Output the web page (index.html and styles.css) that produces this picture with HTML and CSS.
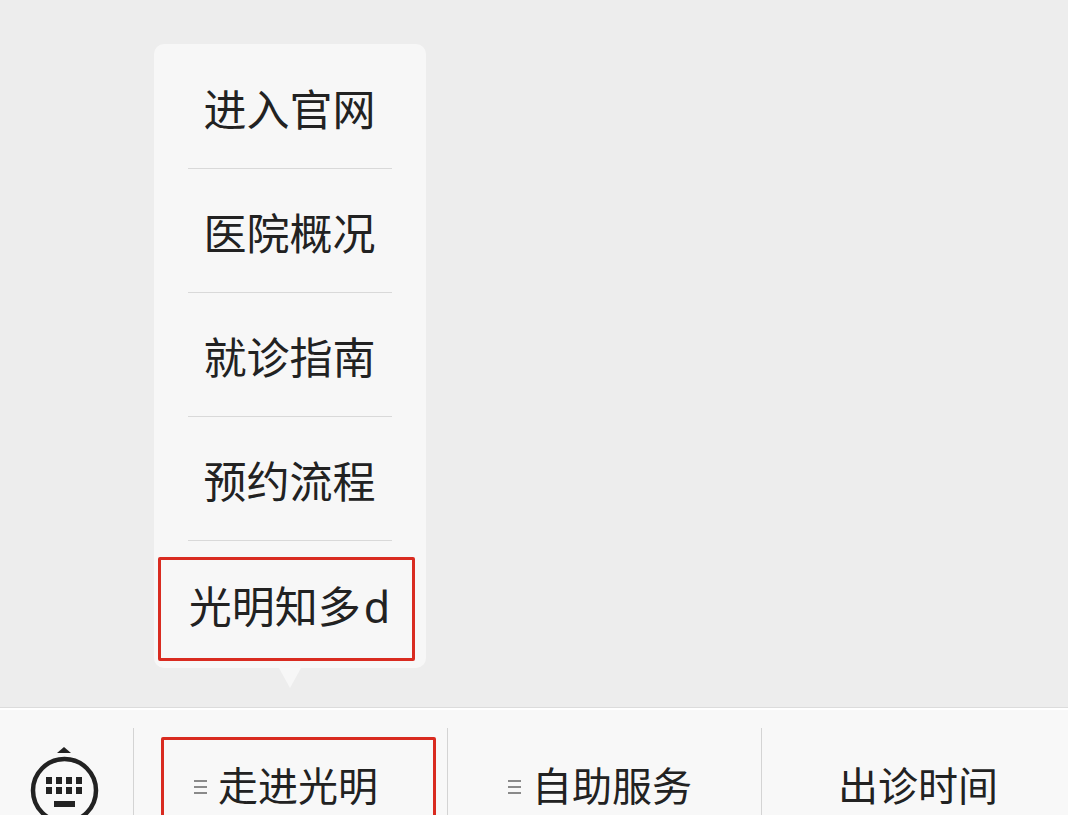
FILE: index.html
```html
<!DOCTYPE html>
<html lang="zh-CN">

<head>
<meta charset="utf-8">
<title>光明</title>
<link rel="stylesheet" href="styles.css">
</head>
<body>
<div class="page">
<div class="popup">
<div class="popup-item">进入官网</div>
<div class="popup-item">医院概况</div>
<div class="popup-item">就诊指南</div>
<div class="popup-item">预约流程</div>
<div class="popup-item popup-last">光明知多<span class="latin">d</span></div>
<div class="mark mark-popup"></div>
<div class="popup-arrow"></div>
</div>
<div class="bar">
<div class="bar-keyboard">
<svg class="keyboard-icon" width="70" height="70" viewBox="0 0 70 70">
<path d="M27 7 L34 1 L41 7 Z" fill="#222"/>
<circle cx="34.5" cy="44.5" r="31.5" fill="none" stroke="#222" stroke-width="4.5"/>
<path fill="#222" d="M16 31h6v7h-6zM26 31h6v7h-6zM36 31h6v7h-6zM46 31h6v7h-6zM16 41h6v7h-6zM26 41h6v7h-6zM36 41h6v7h-6zM46 41h6v7h-6zM24 55h21v6H24z"/>
</svg>
</div>
<div class="bar-cell has-icon">
<span class="menu-lines"></span>走进光明
<div class="mark mark-bar"></div>
</div>
<div class="bar-cell has-icon">
<span class="menu-lines"></span>自助服务
</div>
<div class="bar-cell">出诊时间</div>
</div>
</div>
</body>
</html>
```

FILE: styles.css
```css
html, body {
  margin: 0;
  height: 815px;
  overflow: hidden;
}

.page {
  height: 815px;
  padding-top: 44px;
  box-sizing: border-box;
  overflow: hidden;
  background-color: #ededed;
  font-family: "Liberation Sans", "Noto Sans CJK SC", sans-serif;
  color: #222;
}

.popup {
  position: relative;
  width: 272px;
  margin-left: 154px;
  padding-bottom: 4px;
  border-radius: 10px;
  background-color: #f7f7f7;
}

.popup-item {
  position: relative;
  height: 124px;
  padding-right: 1px;
  line-height: 134px;
  text-align: center;
  font-size: 43px;
}

.popup-item::after {
  content: "";
  position: absolute;
  left: 34px;
  right: 34px;
  bottom: -1px;
  height: 1px;
  background-color: #d9d9d9;
}

.popup-last::after {
  display: none;
}

.latin {
  margin-left: 3px;
  font-family: "Noto Sans", sans-serif;
}

.popup-arrow {
  position: absolute;
  left: 125px;
  bottom: -20px;
  width: 0;
  height: 0;
  border-left: 11px solid transparent;
  border-right: 11px solid transparent;
  border-top: 20px solid #f7f7f7;
}

.mark {
  position: absolute;
  box-sizing: border-box;
  border: 3px solid #d92b20;
  border-radius: 2px;
}

.mark-popup {
  left: 4px;
  top: 513px;
  width: 257px;
  height: 104px;
}

.mark-bar {
  left: 28px;
  top: 29px;
  width: 275px;
  height: 90px;
}

.bar {
  display: flex;
  width: 1075px;
  height: 120px;
  margin-top: 39px;
  border-top: 1px solid #dcdcdc;
  background-color: #f8f8f8;
  box-shadow: inset 0 2px 0 #ffffff;
}

.bar-keyboard {
  flex: 0 0 133px;
  padding: 38px 0 0 30px;
  box-sizing: border-box;
}

.keyboard-icon {
  display: block;
}

.bar-cell {
  position: relative;
  flex: 0 0 314px;
  box-sizing: border-box;
  display: flex;
  align-items: flex-start;
  justify-content: center;
  padding-top: 54px;
  line-height: 50px;
  font-size: 40px;
}

.bar-cell::before {
  content: "";
  position: absolute;
  left: 0;
  top: 20px;
  bottom: 0;
  width: 1px;
  background-color: #d4d4d4;
}

.has-icon {
  padding-right: 8px;
}

.menu-lines {
  width: 13px;
  height: 14px;
  margin: 18px 11px 0 0;
  border-top: 2px solid #8a8a8a;
  border-bottom: 2px solid #8a8a8a;
  box-sizing: border-box;
  background: linear-gradient(#8a8a8a, #8a8a8a) center / 100% 2px no-repeat;
}
```
